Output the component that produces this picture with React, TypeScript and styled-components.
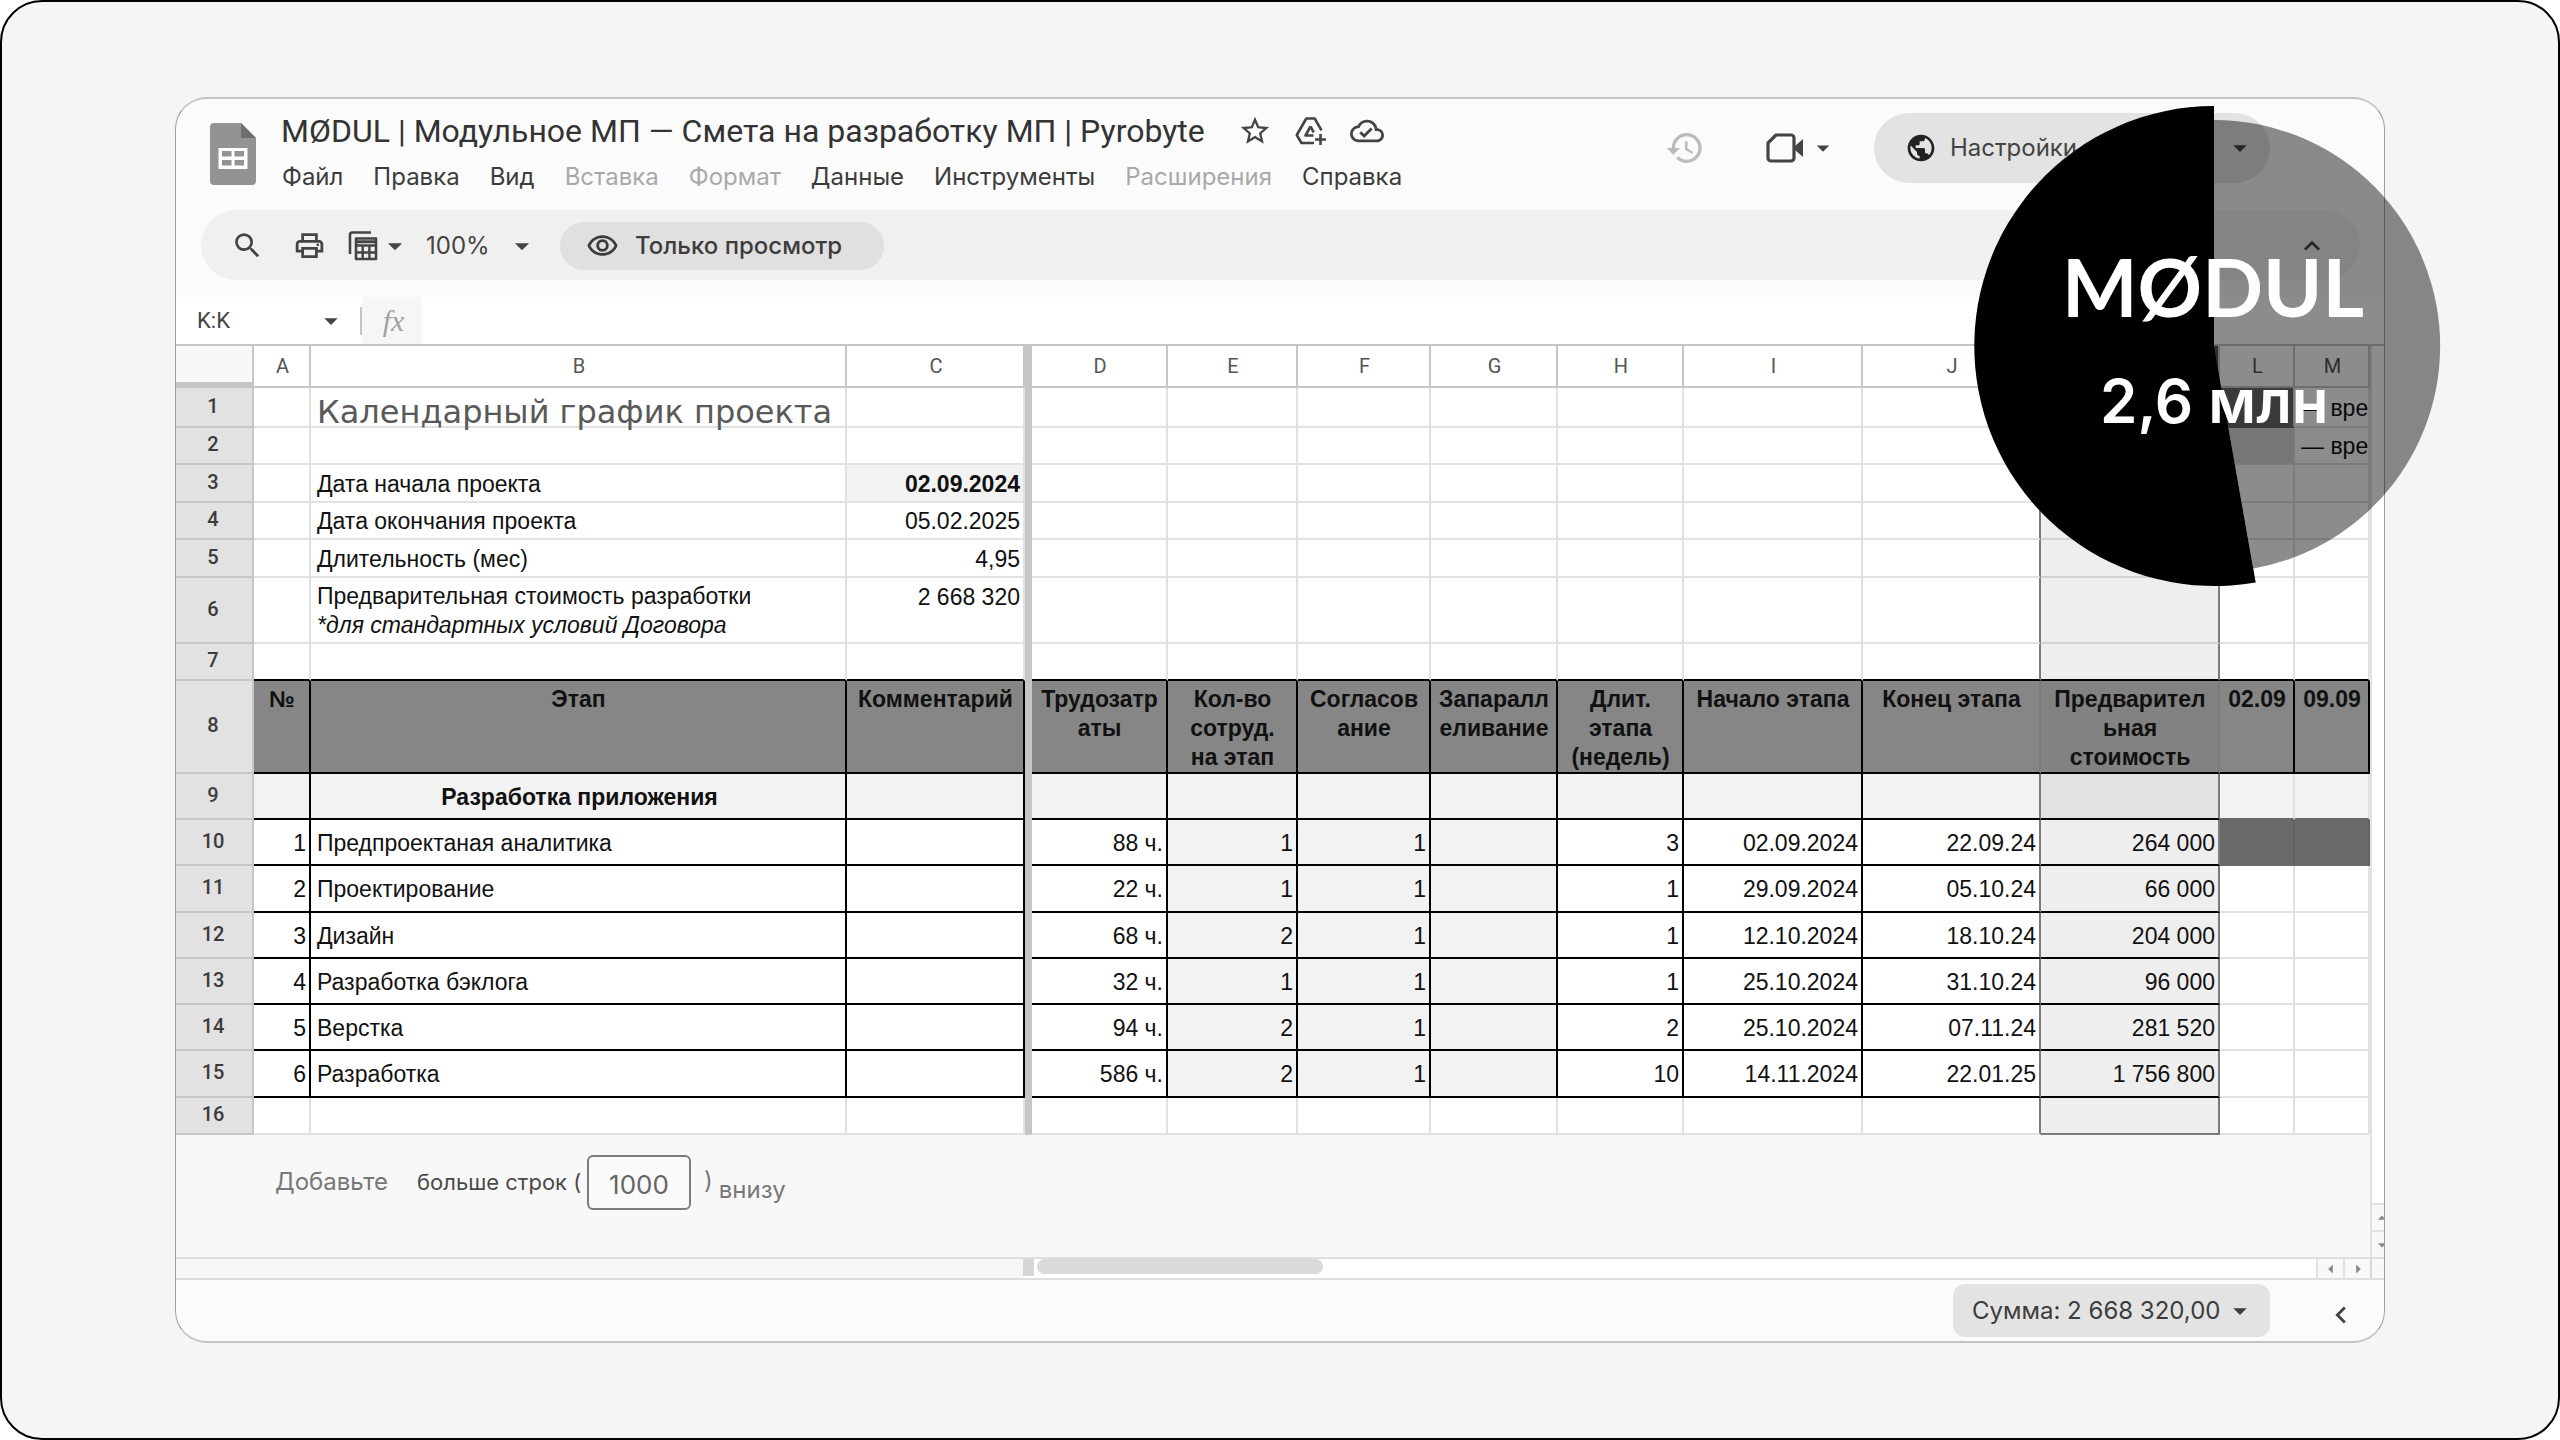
import React from 'react';
import styled, { createGlobalStyle } from 'styled-components';
import {
  MdSearch, MdOutlinePrint, MdHistory, MdPublic, MdStarOutline, MdOutlineCloudDone,
  MdOutlineRemoveRedEye, MdArrowDropDown, MdArrowDropUp,
  MdArrowLeft, MdArrowRight, MdExpandLess, MdChevronLeft,
} from 'react-icons/md';

const ui = '"Inter", "Roboto", sans-serif';
const cellFont = '"Liberation Sans", Arial, sans-serif';

const GlobalStyle = createGlobalStyle`
  *, *::before, *::after { box-sizing: border-box; }
  body { margin: 0; background: #fff; font-family: ${ui}; color: #333; }
  button, input, select { font: inherit; color: inherit; margin: 0; }
`;

const Frame = styled.main`
  min-height: 100vh;
  padding: 95px 173px;
  border: 2px solid #000;
  border-radius: 42px;
  background: #f5f5f5;
`;

const Stage = styled.div`
  position: relative;
`;

const Card = styled.section`
  overflow: hidden;
  border-style: solid;
  border-width: 2px 1px;
  border-color: #c4c4c4 #a2a2a2;
  border-radius: 32px;
  background: #fbfbfb;
`;

const Header = styled.header`
  display: flex;
  height: 111px;
  padding: 12px 114px 0 34px;
`;

const SheetsLogo = styled.svg`
  flex: none;
  width: 46px;
  height: 62px;
  margin-top: 12px;
`;

const Heading = styled.div`
  flex: 1;
  padding-left: 25px;
`;

const TitleRow = styled.div`
  display: flex;
  align-items: center;
  height: 40px;
  gap: 22px;
`;

const DocTitle = styled.h1`
  margin: 0 11px 0 0;
  font: 400 32px/40px "Roboto", sans-serif;
  color: #333;
  white-space: nowrap;
`;

const PlainButton = styled.button<{ $tone?: string }>`
  display: inline-flex;
  align-items: center;
  justify-content: center;
  padding: 0;
  border: 0;
  background: none;
  color: ${(p) => p.$tone || '#444'};
`;

const Menu = styled.nav`
  display: flex;
  gap: 30px;
  padding: 11px 0 0 1px;
`;

const MenuItem = styled.button`
  padding: 0;
  border: 0;
  background: none;
  font: 400 24px/30px ${ui};
  color: #3c3c3c;
  &:disabled { color: #a9a9a9; }
`;

const HeaderActions = styled.div`
  display: flex;
  align-items: center;
  height: 74px;
`;

const CallButton = styled(PlainButton)`
  gap: 4px;
  margin: 0 36px 0 61px;
`;

const ShareButton = styled.button`
  display: flex;
  align-items: center;
  width: 396px;
  height: 70px;
  padding: 0 14px 0 31px;
  border: 0;
  border-radius: 35px;
  background: #e3e3e3;
  font: 400 24px/30px ${ui};
  color: #444;
  svg:first-child { margin-right: 13px; color: #222; }
  svg:last-child { margin-left: auto; }
`;

const Toolbar = styled.div`
  display: flex;
  align-items: center;
  height: 70px;
  margin: 0 24px 17px 25px;
  padding: 1px 32px 0 23px;
  border-radius: 35px;
  background: #f0f0f0;
  color: #444;
`;

const ToolGroup = styled.div`
  display: flex;
  align-items: center;
  gap: 16px;
`;

const ToolButton = styled(PlainButton)`
  min-width: 46px;
`;

const SelectBox = styled.label`
  display: flex;
  align-items: center;
  width: 113px;
  margin-left: 14px;
  svg { flex: none; margin-left: -34px; pointer-events: none; }
`;

const Select = styled.select`
  appearance: none;
  width: 100%;
  padding: 0;
  border: 0;
  background: none;
  font: 400 24px/30px ${ui};
`;

const ViewOnly = styled.button`
  display: flex;
  align-items: center;
  gap: 16px;
  width: 324px;
  height: 48px;
  margin-left: 21px;
  padding: 0 0 0 26px;
  border: 0;
  border-radius: 24px;
  background: #e0e0e0;
  font: 500 24px/30px ${ui};
  color: #3c3c3c;
  white-space: nowrap;
`;

const Collapse = styled(PlainButton)`
  margin-left: auto;
`;

const FormulaBar = styled.div`
  display: flex;
  align-items: center;
  height: 49px;
  border-bottom: 2px solid #c4c4c4;
  background: #fff;
`;

const NameBox = styled.input`
  width: 139px;
  padding: 0 0 0 21px;
  border: 0;
  background: none;
  font: 400 22px/30px "Roboto", sans-serif;
  color: #444;
`;

const FormulaMark = styled.span`
  display: flex;
  align-items: center;
  justify-content: center;
  align-self: stretch;
  width: 60px;
  padding-left: 3px;
  background: #f6f6f6;
  font: italic 400 30px/40px "Liberation Serif", serif;
  color: #a2a2a2;
`;

const Divider = styled.span`
  width: 2px;
  height: 28px;
  margin-left: 13px;
  background: #c4c4c4;
`;

const FormulaInput = styled.input`
  flex: 1;
  border: 0;
  background: none;
  padding: 0 10px;
`;

const SheetArea = styled.div`
  display: flex;
`;

const SheetMain = styled.div`
  flex: 1;
  min-width: 0;
  background: #f8f8f8;
`;

const Table = styled.table`
  width: 100%;
  table-layout: fixed;
  border-collapse: separate;
  border-spacing: 0;
  background: #fff;
  font: 400 23px/29px ${cellFont};
  color: #111;
`;

const Row = styled.tr<{ $h: number }>`
  height: ${(p) => p.$h}px;
`;

const ColHead = styled.th<{ $selected?: boolean }>`
  padding: 0 0 0 2px;
  border: solid #c6c6c6;
  border-width: 0 2px 2px 0;
  background: ${(p) => (p.$selected ? '#555' : '#fff')};
  font: 400 20px/24px "Roboto", sans-serif;
  color: ${(p) => (p.$selected ? '#fff' : '#555')};
`;

const Corner = styled.td`
  padding: 0;
  border: solid #c6c6c6;
  border-width: 0 2px 6px 0;
  background: #f8f8f8;
`;

const RowHead = styled.th`
  padding: 0 2px 3px 0;
  border: solid #c6c6c6;
  border-width: 0 2px 2px 0;
  background: #e2e2e2;
  font: 500 20px/24px "Roboto", sans-serif;
  color: #3c3c3c;
`;

const FreezeBar = styled.td`
  padding: 0;
  background: #c6c6c6;
`;

type CellStyle = {
  $bg?: string; $right?: string; $bottom?: string; $align?: string;
  $bold?: boolean; $top?: boolean;
};

const Cell = styled.td<CellStyle>`
  padding: ${(p) => (p.$top ? 5 : 2)}px 3px 0 6px;
  border: solid;
  border-width: 0 2px 2px 0;
  border-color: transparent ${(p) => p.$right || '#e1e1e1'} ${(p) => p.$bottom || '#e1e1e1'} transparent;
  background: ${(p) => p.$bg || '#fff'};
  text-align: ${(p) => p.$align || 'left'};
  vertical-align: ${(p) => (p.$top ? 'top' : 'middle')};
  font-weight: ${(p) => (p.$bold ? 700 : 400)};
  white-space: pre;
`;

const HeadCell = styled(Cell)`
  padding: 4px 0 0 1px;
`;

const SheetTitle = styled.span`
  display: block;
  height: 36px;
  font: 400 32px/44px "DejaVu Sans", Verdana, sans-serif;
  color: #595959;
`;

const Note = styled.em`
  display: block;
`;

const AddRows = styled.form`
  display: flex;
  align-items: flex-start;
  height: 122px;
  padding: 20px 0 0 99px;
  color: #777;
`;

const AddButton = styled.button`
  width: 113px;
  padding: 0;
  margin: 12px 29px 0 0;
  border: 0;
  background: none;
  font: 400 24px/30px ${ui};
  color: #777;
  text-align: left;
`;

const AddLabel = styled.label`
  width: 170px;
  padding-top: 12px;
  font: 400 22px/30px ${ui};
  color: #4a4a4a;
  white-space: nowrap;
`;

const CountInput = styled.input`
  width: 104px;
  height: 55px;
  padding: 4px 0 0;
  border: 2px solid #7c7c7c;
  border-radius: 6px;
  background: #fafafa;
  font: 400 26px/30px ${ui};
  color: #666;
  text-align: center;
`;

const AfterText = styled.span<{ $top: number; $left: number }>`
  padding-top: ${(p) => p.$top}px;
  margin-left: ${(p) => p.$left}px;
  font: 400 24px/30px ${ui};
`;

const VTrack = styled.div`
  display: flex;
  flex-direction: column;
  justify-content: flex-end;
  flex: none;
  width: 14px;
  border-left: 2px solid #e1e1e1;
  background: #fff;
`;

const VStep = styled.button`
  display: flex;
  align-items: center;
  height: 27px;
  padding: 0;
  border: 0;
  border-top: 2px solid #e1e1e1;
  background: #f8f8f8;
  color: #888;
  svg { flex: none; }
`;

const HScroll = styled.div`
  display: flex;
  height: 23px;
  border: solid #dedede;
  border-width: 2px 0;
  background: #fff;
`;

const FrozenPart = styled.div`
  width: 847px;
  background: #f7f7f7;
`;

const Grip = styled.div`
  width: 11px;
  height: 17px;
  background: #d6d6d6;
`;

const Track = styled.div`
  flex: 1;
  padding: 0 3px;
`;

const Thumb = styled.div`
  width: 286px;
  height: 15px;
  border-radius: 8px;
  background: #dadada;
`;

const HStep = styled.button`
  display: flex;
  align-items: center;
  justify-content: center;
  width: 27px;
  padding: 0;
  border: 0;
  border-left: 2px solid #e1e1e1;
  background: #f8f8f8;
  color: #888;
`;

const ScrollEnd = styled.div`
  width: 14px;
  border-left: 2px solid #d8d8d8;
  background: #f8f8f8;
`;

const Footer = styled.footer`
  display: flex;
  align-items: center;
  justify-content: flex-end;
  height: 61px;
  padding-right: 26px;
`;

const PanelToggle = styled(PlainButton)`
  padding-top: 8px;
`;

const SumBox = styled.label`
  display: flex;
  align-items: center;
  width: 317px;
  height: 53px;
  margin-right: 54px;
  padding: 0 14px 0 19px;
  border-radius: 12px;
  background: #e3e3e3;
  color: #3c3c3c;
  svg { flex: none; pointer-events: none; }
`;

const Badge = styled.aside`
  position: absolute;
  top: 9px;
  right: -69px;
  width: 480px;
  height: 480px;
  color: #fff;
`;

const Pie = styled.svg`
  position: absolute;
  inset: 0;
`;

const BadgeText = styled.div`
  position: relative;
  padding: 132px 0 0 88px;
  white-space: nowrap;
`;

const Brand = styled.p`
  margin: 0;
  font: 700 80px/96px "Lato", sans-serif;
`;

const Amount = styled.p`
  margin: 27px 0 0 38px;
  font: 600 60px/80px "Inter", sans-serif;
`;

const DriveAddIcon = () => (
  <svg width="34" height="34" viewBox="0 0 34 34" fill="none" stroke="#444" strokeWidth="2.600" strokeLinejoin="round">
    <path d="M20 29H7.500L2.800 21 12.300 4.500H20.700L27.500 16.300" />
    <path d="M16.500 12.500 11.500 21.500H19.500" />
    <path d="M16.500 12.500 19.800 18.300" />
    <path d="M26.500 20V31M21 25.500H32" />
  </svg>
);

const VideoIcon = () => (
  <svg width="38" height="30" viewBox="0 0 38 30" fill="none">
    <path d="M10 2H25a3 3 0 0 1 3 3V25a3 3 0 0 1-3 3H5a3 3 0 0 1-3-3V10Z" stroke="#444" strokeWidth="3.2" strokeLinejoin="round" />
    <path d="M29 13 37 6V24L29 17Z" fill="#444" />
  </svg>
);

const FilterViewIcon = () => (
  <svg width="30" height="30" viewBox="0 0 30 30" fill="none" stroke="#444">
    <path d="M2 23V3.500a2 2 0 0 1 2-2H23" strokeWidth="2.600" />
    <path d="M8 7.500H28V28H8Z" strokeWidth="2.600" strokeLinejoin="round" />
    <path d="M8 14.500H28M8 21.500H28M14.700 14.500V28M21.400 14.500V28" strokeWidth="2.400" />
    <path d="M8 10.800H28" strokeWidth="3" />
  </svg>
);

const menuItems: [string, boolean][] = [
  ['Файл', true], ['Правка', true], ['Вид', true], ['Вставка', false], ['Формат', false],
  ['Данные', true], ['Инструменты', true], ['Расширения', false], ['Справка', true],
];

const letters = 'ABCDEFGHIJKLM'.split('');
const widths: Record<string, number | undefined> = {
  A: 57, B: undefined, C: 178, D: 136, E: 130, F: 133, G: 127, H: 126, I: 179, J: 178, K: 179, L: 75, M: 75,
};
const rowHeights = [40, 37, 38, 37, 38, 66, 37, 93, 46, 46, 47, 46, 46, 46, 47, 37];

const headings: Record<string, string> = {
  A: '№', B: 'Этап', C: 'Комментарий', D: 'Трудозатр\nаты', E: 'Кол-во\nсотруд.\nна этап',
  F: 'Согласов\nание', G: 'Запаралл\nеливание', H: 'Длит.\nэтапа\n(недель)', I: 'Начало этапа',
  J: 'Конец этапа', K: 'Предварител\nьная\nстоимость', L: '02.09', M: '09.09',
};

const stages = [
  ['1', 'Предпроектаная аналитика', '', '88 ч.', '1', '1', '', '3', '02.09.2024', '22.09.24', '264 000'],
  ['2', 'Проектирование', '', '22 ч.', '1', '1', '', '1', '29.09.2024', '05.10.24', '66 000'],
  ['3', 'Дизайн', '', '68 ч.', '2', '1', '', '1', '12.10.2024', '18.10.24', '204 000'],
  ['4', 'Разработка бэклога', '', '32 ч.', '1', '1', '', '1', '25.10.2024', '31.10.24', '96 000'],
  ['5', 'Верстка', '', '94 ч.', '2', '1', '', '2', '25.10.2024', '07.11.24', '281 520'],
  ['6', 'Разработка', '', '586 ч.', '2', '1', '', '10', '14.11.2024', '22.01.25', '1 756 800'],
];

const summary: Record<string, React.ReactNode> = {
  B1: <SheetTitle>Календарный график проекта</SheetTitle>,
  B3: 'Дата начала проекта', C3: '02.09.2024',
  B4: 'Дата окончания проекта', C4: '05.02.2025',
  B5: 'Длительность (мес)', C5: '4,95',
  B6: <>Предварительная стоимость разработки<Note>*для стандартных условий Договора</Note></>,
  C6: '2 668 320',
  M1: '— вре', M2: '— вре',
  B9: 'Разработка приложения',
};

function cellContent(col: string, row: number): React.ReactNode {
  if (row >= 10 && row <= 15) return stages[row - 10][letters.indexOf(col)];
  return summary[col + row];
}

function cellStyle(col: string, row: number): CellStyle {
  const late = col === 'L' || col === 'M';
  const framed = row >= 8 && row <= 15;
  const s: CellStyle = {};
  if (framed && !late) { s.$right = '#000'; s.$bottom = '#000'; }
  if (row === 8) { s.$right = '#000'; s.$bottom = '#000'; s.$bg = col === 'K' ? '#828282' : '#868686'; s.$align = 'center'; s.$bold = true; s.$top = true; }
  if (row === 7) s.$bottom = '#000';
  if (row === 9) {
    s.$bg = '#f2f2f2';
    if (col === 'B') { s.$align = 'center'; s.$bold = true; }
    if (late) s.$bottom = '#696969';
  }
  if (row >= 10 && row <= 15) {
    if (col !== 'B') s.$align = 'right';
    if ('EFG'.includes(col)) s.$bg = '#f2f2f2';
  }
  if (late && row === 10) { s.$bg = '#696969'; s.$right = '#626262'; s.$bottom = '#696969'; }
  if (col === 'L' && row === 1) { s.$bg = '#6b6b6b'; s.$bottom = '#6b6b6b'; }
  if (col === 'L' && row === 2) s.$bg = '#d8d8d8';
  if (col === 'C' && row <= 6) { s.$align = 'right'; s.$top = row === 6; }
  if (col === 'C' && row === 3) { s.$bg = '#f2f2f2'; s.$bold = true; }
  if (col === 'J') s.$right = '#7b7b7b';
  if (col === 'K') {
    s.$right = '#7b7b7b';
    if (row === 9) s.$bg = '#e2e2e2';
    else if (row !== 8) s.$bg = '#eee';
    if (row < 7) s.$bottom = '#d2d2d2';
    if (row === 16) s.$bottom = '#7b7b7b';
  }
  return s;
}

const SheetRow = ({ row }: { row: number }) => (
  <Row $h={rowHeights[row - 1]}>
    <RowHead scope="row">{row}</RowHead>
    {letters.map((col) => (
      <React.Fragment key={col}>
        {row === 8
          ? <HeadCell {...cellStyle(col, row)}>{headings[col]}</HeadCell>
          : <Cell {...cellStyle(col, row)}>{cellContent(col, row)}</Cell>}
        {col === 'C' && <FreezeBar />}
      </React.Fragment>
    ))}
  </Row>
);

export default function App() {
  return (
    <>
      <GlobalStyle />
      <Frame>
        <Stage>
          <Card>
            <Header>
              <SheetsLogo viewBox="0 0 46 62">
                <path d="M4 0H31L46 15V58a4 4 0 0 1-4 4H4a4 4 0 0 1-4-4V4a4 4 0 0 1 4-4Z" fill="#939393" />
                <path d="M31 0 46 15H31Z" fill="#6e6e6e" />
                <path d="M8.500 25H37.500V46H8.500Z" fill="#fff" />
                <path d="M12 28h9.500v5.500H12ZM24.500 28H34v5.500h-9.500ZM12 37h9.500v5.500H12ZM24.500 37H34v5.500h-9.500Z" fill="#939393" />
              </SheetsLogo>
              <Heading>
                <TitleRow>
                  <DocTitle>MØDUL | Модульное МП — Смета на разработку МП | Pyrobyte</DocTitle>
                  <PlainButton aria-label="Пометить"><MdStarOutline size={34} /></PlainButton>
                  <PlainButton aria-label="Добавить на Диск"><DriveAddIcon /></PlainButton>
                  <PlainButton aria-label="Статус документа"><MdOutlineCloudDone size={34} /></PlainButton>
                </TitleRow>
                <Menu>
                  {menuItems.map(([name, on]) => <MenuItem key={name} disabled={!on}>{name}</MenuItem>)}
                </Menu>
              </Heading>
              <HeaderActions>
                <PlainButton $tone="#bbb" aria-label="История"><MdHistory size={40} /></PlainButton>
                <CallButton aria-label="Видеовстреча"><VideoIcon /><MdArrowDropDown size={30} /></CallButton>
                <ShareButton><MdPublic size={32} />Настройки доступа<MdArrowDropDown size={32} /></ShareButton>
              </HeaderActions>
            </Header>

            <Toolbar>
              <ToolGroup>
                <ToolButton aria-label="Поиск"><MdSearch size={33} /></ToolButton>
                <ToolButton aria-label="Печать"><MdOutlinePrint size={33} /></ToolButton>
                <ToolButton aria-label="Фильтры"><FilterViewIcon /><MdArrowDropDown size={34} /></ToolButton>
              </ToolGroup>
              <SelectBox>
                <Select aria-label="Масштаб" defaultValue="100%"><option>100%</option></Select>
                <MdArrowDropDown size={34} />
              </SelectBox>
              <ViewOnly><MdOutlineRemoveRedEye size={33} />Только просмотр</ViewOnly>
              <Collapse aria-label="Скрыть меню"><MdExpandLess size={32} /></Collapse>
            </Toolbar>

            <FormulaBar>
              <NameBox aria-label="Диапазон" defaultValue="K:K" />
              <PlainButton aria-label="Список диапазонов"><MdArrowDropDown size={32} /></PlainButton>
              <Divider />
              <FormulaMark>fx</FormulaMark>
              <FormulaInput aria-label="Формула" />
            </FormulaBar>

            <SheetArea>
              <SheetMain>
                <Table>
                  <colgroup>
                    <col style={{ width: 78 }} />
                    {letters.map((l) => (
                      <React.Fragment key={l}>
                        <col style={{ width: widths[l] }} />
                        {l === 'C' && <col style={{ width: 7 }} />}
                      </React.Fragment>
                    ))}
                  </colgroup>
                  <thead>
                    <Row $h={42}>
                      <Corner />
                      {letters.map((l) => (
                        <React.Fragment key={l}>
                          <ColHead scope="col" $selected={l === 'K'}>{l}</ColHead>
                          {l === 'C' && <FreezeBar />}
                        </React.Fragment>
                      ))}
                    </Row>
                  </thead>
                  <tbody>
                    {rowHeights.map((_, i) => <SheetRow key={i} row={i + 1} />)}
                  </tbody>
                </Table>
                <AddRows onSubmit={(e) => e.preventDefault()}>
                  <AddButton>Добавьте</AddButton>
                  <AddLabel htmlFor="row-count">больше строк (</AddLabel>
                  <CountInput id="row-count" defaultValue="1000" />
                  <AfterText $top={11} $left={13}>)</AfterText>
                  <AfterText $top={20} $left={6}>внизу</AfterText>
                </AddRows>
              </SheetMain>
              <VTrack>
                <VStep aria-label="Вверх"><MdArrowDropUp size={20} /></VStep>
                <VStep aria-label="Вниз"><MdArrowDropDown size={20} /></VStep>
              </VTrack>
            </SheetArea>

            <HScroll>
              <FrozenPart />
              <Grip />
              <Track><Thumb /></Track>
              <HStep aria-label="Влево"><MdArrowLeft size={22} /></HStep>
              <HStep aria-label="Вправо"><MdArrowRight size={22} /></HStep>
              <ScrollEnd />
            </HScroll>

            <Footer>
              <SumBox>
                <Select aria-label="Итог" defaultValue="sum"><option value="sum">Сумма: 2 668 320,00</option></Select>
                <MdArrowDropDown size={32} />
              </SumBox>
              <PanelToggle aria-label="Показать панель"><MdChevronLeft size={34} /></PanelToggle>
            </Footer>
          </Card>

          <Badge>
            <Pie viewBox="0 0 480 480">
              <path d="M240 240V14A226 226 0 0 1 279.200 462.600Z" fill="#000" fillOpacity="0.45" />
              <path d="M240 240V0A240 240 0 1 0 281.700 476.400Z" fill="#000" />
            </Pie>
            <BadgeText>
              <Brand>MØDUL</Brand>
              <Amount>2,6 млн</Amount>
            </BadgeText>
          </Badge>
        </Stage>
      </Frame>
    </>
  );
}
